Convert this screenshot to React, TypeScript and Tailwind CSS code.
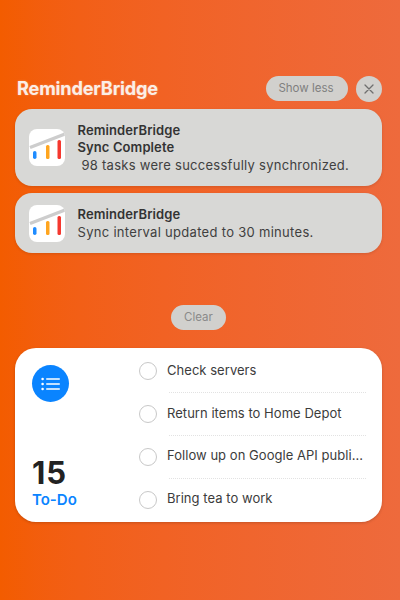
const FONT = "font-['Inter','Liberation_Sans',sans-serif]";

function AppIcon() {
  return (
    <div className="w-[36px] h-[37px] shrink-0 rounded-[8px] bg-white overflow-hidden">
      <svg viewBox="0 0 36 37" className="w-full h-full">
        <path d="M1 18.5L36 5" stroke="#cdcdcd" strokeWidth="3.4" />
        <rect x="4" y="22" width="3.5" height="8" rx="1.75" fill="#1f8cff" />
        <rect x="17" y="16" width="3.5" height="14" rx="1.5" fill="#ffa51f" />
        <rect x="28.5" y="11" width="3.5" height="19" rx="1.5" fill="#f5382f" />
      </svg>
    </div>
  );
}

function Task({ label, last }: { label: string; last?: boolean }) {
  return (
    <div>
      <div className="flex items-center h-[41.9px]">
        <span className="w-[18px] h-[18px] rounded-full border-[1.5px] border-[#c8c8c8] shrink-0" />
        <span className="ml-[10px] -mt-[1px] text-[13px] tracking-[0.04px] text-[#3c3c3c] whitespace-nowrap">{label}</span>
      </div>
      {!last && <div className="ml-[30px] border-b border-dotted border-[#e2e2e2]" />}
    </div>
  );
}

export default function App() {
  return (
    <div className={`${FONT} w-[400px] h-[600px] overflow-hidden pl-[15px] pr-[18px] pt-[76px] bg-gradient-to-r from-[#f35c00] to-[#ee6a3c]`}>
      <div className="flex items-center h-[25px]">
        <h1 className="ml-[2px] text-[18.2px] font-bold tracking-[-0.2px] text-[#fbeee6] flex-1 [text-shadow:0_0_2px_rgba(255,255,255,0.35)]">ReminderBridge</h1>
        <button className="w-[82px] h-[25px] pr-[2px] rounded-full bg-[#d1d0cd] text-[11.5px] text-[#7f7f7f]">Show less</button>
        <button className="ml-[8px] w-[26px] h-[26px] rounded-full bg-[#d1d0cd] flex items-center justify-center">
          <svg viewBox="0 0 12 12" className="w-[12px] h-[12px]" stroke="#6f6f6f" strokeWidth="1.3" strokeLinecap="round">
            <path d="M2 2l8 8M10 2l-8 8" />
          </svg>
        </button>
      </div>

      <div className="mt-[8px] h-[77px] rounded-[17px] bg-[#d8d8d6] shadow-[0_1px_3px_rgba(0,0,0,0.12)] flex items-center pl-[14px]">
        <AppIcon />
        <div className="ml-[12.5px] pt-[1px] text-[13px] leading-[17.5px] text-[#333]">
          <div className="font-semibold tracking-[0.1px]">ReminderBridge</div>
          <div className="font-semibold tracking-[0.1px]">Sync Complete</div>
          <div className="text-[#404040] tracking-[0.27px] whitespace-pre"> 98 tasks were successfully synchronized.</div>
        </div>
      </div>

      <div className="mt-[7px] h-[60px] rounded-[17px] bg-[#d8d8d6] shadow-[0_1px_3px_rgba(0,0,0,0.12)] flex items-center pl-[14px]">
        <AppIcon />
        <div className="ml-[12.5px] pt-[1px] text-[13px] leading-[17.5px] text-[#333]">
          <div className="font-semibold tracking-[0.1px]">ReminderBridge</div>
          <div className="text-[#404040] tracking-[0.3px]">Sync interval updated to 30 minutes.</div>
        </div>
      </div>

      <div className="mt-[52px] flex justify-center">
        <button className="w-[55px] h-[25px] rounded-full bg-[#d1d0cd] text-[11.5px] text-[#8a8a8a]">Clear</button>
      </div>

      <div className="mt-[18px] h-[174px] rounded-[21px] bg-white shadow-[0_1px_3px_rgba(0,0,0,0.18)] flex">
        <div className="w-[124px] pl-[17px] pt-[17px] pb-[13px] flex flex-col">
          <div className="w-[37px] h-[37px] rounded-full bg-[#0a84ff] flex items-center justify-center">
            <svg viewBox="0 0 20 14" className="w-[20px] h-[14px]" fill="#fff">
              <circle cx="1.6" cy="2" r="1.3" />
              <circle cx="1.6" cy="7" r="1.3" />
              <circle cx="1.6" cy="12" r="1.3" />
              <rect x="5" y="1.2" width="14" height="1.6" rx="0.8" />
              <rect x="5" y="6.2" width="14" height="1.6" rx="0.8" />
              <rect x="5" y="11.2" width="14" height="1.6" rx="0.8" />
            </svg>
          </div>
          <div className="mt-auto text-[31px] leading-[34px] font-bold tracking-[0.8px] text-[#222]">15</div>
          <div className="text-[15px] leading-[19px] font-semibold text-[#0a84ff]">To-Do</div>
        </div>
        <div className="flex-1 min-w-0 pt-[2px] pr-[16px] overflow-hidden">
          <Task label="Check servers" />
          <Task label="Return items to Home Depot" />
          <Task label="Follow up on Google API publi..." />
          <Task label="Bring tea to work" last />
        </div>
      </div>
    </div>
  );
}
